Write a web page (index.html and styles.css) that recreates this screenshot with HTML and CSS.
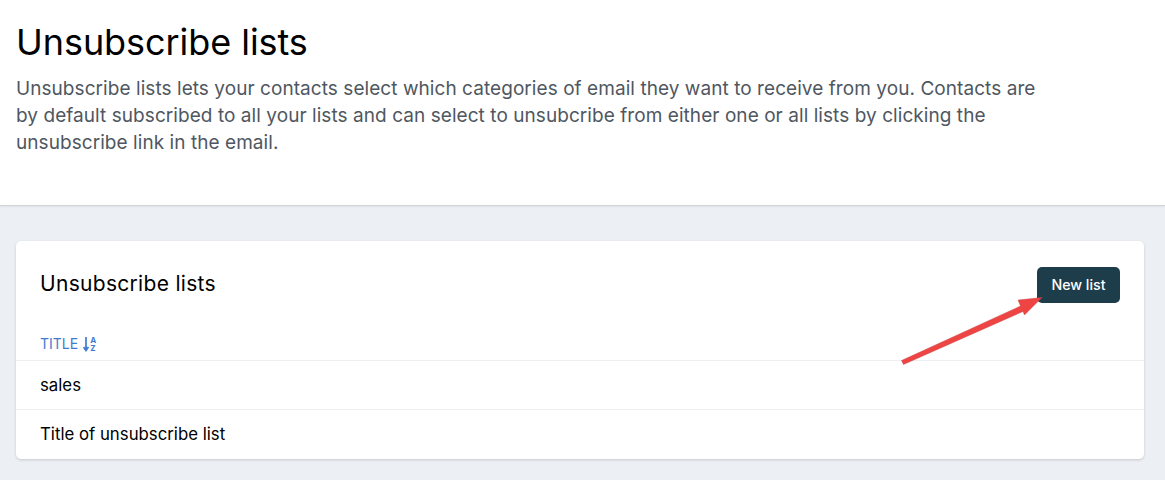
FILE: index.html
```html
<!DOCTYPE html>
<html lang="en">
<head>
<meta charset="utf-8">
<title>Unsubscribe lists</title>
<link rel="stylesheet" href="styles.css">
</head>
<body>
<header class="page-header">
  <h1 class="page-title">Unsubscribe lists</h1>
  <p class="page-desc">Unsubscribe lists lets your contacts select which categories of email they want to receive from you. Contacts are by default subscribed to all your lists and can select to unsubcribe from either one or all lists by clicking the unsubscribe link in the email.</p>
</header>
<main class="content">
  <section class="card">
    <div class="card-head">
      <h2 class="card-title">Unsubscribe lists</h2>
      <button class="btn" type="button">New list</button>
    </div>
    <div class="col-head">
      <span>TITLE</span>
      <svg class="sort-icon" width="8" height="16" viewBox="0 0 8 16" aria-hidden="true">
        <path d="M3 1V14M.6 11L3 14.5L5.4 11" fill="none" stroke="currentColor" stroke-width="1.7"/>
      </svg>
      <span class="sort-letters"><span>A</span><span>Z</span></span>
    </div>
    <div class="row">sales</div>
    <div class="row">Title of unsubscribe list</div>
    <svg class="arrow" width="160" height="90" viewBox="0 0 160 90" aria-hidden="true">
      <path d="M5.5 69.5L7.5 73.5L127 20.5L128.5 24L146 6.5L122 9L124.5 15Z" fill="#ef4444" stroke="#c0403f" stroke-width="0.4"/>
    </svg>
  </section>
</main>
</body>
</html>
```

FILE: styles.css
```css
* { box-sizing: border-box; }
html, body { margin: 0; height: 480px; overflow: hidden; }
body {
  background: #eceff4;
  font-family: Inter, "Liberation Sans", sans-serif;
  color: #0b0f14;
}
.page-header {
  height: 206px;
  background: #fff;
  border-bottom: 1px solid #d2d4d8;
  box-shadow: 0 1px 2px rgba(0, 0, 0, 0.06);
  padding: 18px 16px 0;
}
.page-title {
  margin: 0;
  font-size: 36px;
  line-height: 48px;
  font-weight: 400;
  letter-spacing: -0.06px;
  color: #000;
}
.page-desc {
  margin: 9px 0 0;
  width: 1040px;
  font-size: 19px;
  line-height: 27px;
  letter-spacing: 0.06px;
  color: #4f5761;
}
.content { padding: 35px 21px 0 16px; }
.card {
  position: relative;
  height: 218px;
  background: #fff;
  border-radius: 5px;
  box-shadow: 0 1px 3px rgba(0, 0, 0, 0.16);
}
.card-head {
  height: 83px;
  padding: 26px 24px 0;
  display: flex;
  justify-content: space-between;
  align-items: flex-start;
}
.card-title {
  margin: 3px 0 0;
  font-size: 21px;
  line-height: 28px;
  font-weight: 400;
  letter-spacing: 0.3px;
  color: #000;
}
.btn {
  width: 83px;
  height: 36px;
  padding: 0 0 2px;
  border: 0;
  border-radius: 5px;
  background: #1e3d4a;
  color: #fff;
  font: 500 14.2px Inter, "Liberation Sans", sans-serif;
}
.col-head {
  height: 36px;
  padding: 11px 24px 0;
  display: flex;
  align-items: flex-start;
  color: #3f7ccf;
  font-size: 14px;
  line-height: 18px;
}
.sort-icon { margin: 1px 0 0 5px; }
.sort-letters {
  display: flex;
  flex-direction: column;
  margin-left: -1px;
  font-size: 8px;
  line-height: 8px;
  font-weight: 700;
  padding-top: 1px;
}
.row {
  height: 49px;
  padding: 0 24px;
  border-top: 1px solid #eceef1;
  display: flex;
  align-items: center;
  font-size: 16.8px;
  color: #000;
}
.row + .row { height: 50px; padding-bottom: 1px; }
.arrow {
  position: absolute;
  left: 880px;
  top: 50px;
}
```
